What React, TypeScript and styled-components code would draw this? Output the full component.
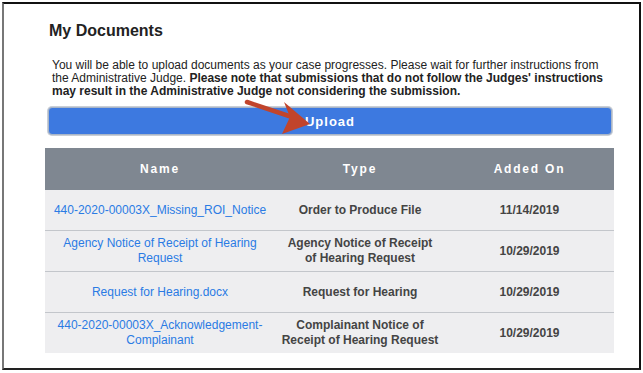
import React from 'react';
import styled, { createGlobalStyle } from 'styled-components';

const GlobalStyle = createGlobalStyle`
  body {
    margin: 0;
    background: #ffffff;
    font-family: "Liberation Sans", Arial, sans-serif;
  }
`

const Frame = styled.div`
  position: relative;
  box-sizing: border-box;
  margin: 2px 0 0 2px;
  width: 639px;
  height: 368px;
  border-top: 2px solid #111;
  border-right: 2px solid #111;
  border-bottom: 2px solid #222;
  border-left: 2px solid #777;
  padding: 0 24px 0 41px;
`

const Title = styled.h2`
  margin: 18px 0 0 4px;
  font-size: 16px;
  font-weight: bold;
  color: #222;
`

const Intro = styled.p`
  margin: 19px 0 0 7px;
  font-size: 12px;
  line-height: 13px;
  color: #222;
  width: 560px;

  strong {
    font-weight: bold;
  }
`

const UploadButton = styled.button`
  display: block;
  box-sizing: border-box;
  margin: 9px 0 0 3px;
  width: 564px;
  height: 28px;
  border: 1px solid #a9b6c8;
  border-radius: 4px;
  background: #3d79e0;
  color: #fff;
  font-family: "Liberation Sans", Arial, sans-serif;
  font-size: 13px;
  font-weight: bold;
  letter-spacing: 1px;
  box-shadow: 0 0 0 1px #c9ced6;
`

const Table = styled.table`
  margin-top: 13px;
  width: 569px;
  border-collapse: collapse;
  table-layout: fixed;
`

const HeadCell = styled.th<{ $w: number }>`
  width: ${p => p.$w}px;
  height: 42px;
  padding: 0;
  background: #7f8791;
  color: #fff;
  font-size: 12px;
  font-weight: bold;
  letter-spacing: 1.8px;
  text-align: center;
`

const Row = styled.tr`
  background: #eeeef0;
  border-top: 1px solid #c3c6cb;

  &:first-child {
    border-top: none;
  }
`

const Cell = styled.td<{ $bold?: boolean }>`
  height: 40px;
  padding: 0 6px;
  text-align: center;
  font-size: 12px;
  line-height: 15px;
  font-weight: ${p => (p.$bold ? 'bold' : 'normal')};
  color: #444;
`

const DocLink = styled.a`
  color: #2a7be4;
  text-decoration: none;
`

const Arrow = styled.svg`
  position: absolute;
  left: 240px;
  top: 93px;
`

const docs = [
  { name: '440-2020-00003X_Missing_ROI_Notice', type: 'Order to Produce File', date: '11/14/2019' },
  { name: 'Agency Notice of Receipt of Hearing Request', type: 'Agency Notice of Receipt of Hearing Request', date: '10/29/2019' },
  { name: 'Request for Hearing.docx', type: 'Request for Hearing', date: '10/29/2019' },
  { name: '440-2020-00003X_Acknowledgement-Complainant', type: 'Complainant Notice of Receipt of Hearing Request', date: '10/29/2019' },
]

const App = () => {
  return (
    <>
      <GlobalStyle />
      <Frame>
        <Title>My Documents</Title>
        <Intro>
          You will be able to upload documents as your case progresses. Please wait for further instructions from
          the Administrative Judge. <strong>Please note that submissions that do not follow the Judges' instructions
          may result in the Administrative Judge not considering the submission.</strong>
        </Intro>
        <UploadButton>Upload</UploadButton>
        <Table>
          <thead>
            <tr>
              <HeadCell $w={230}>Name</HeadCell>
              <HeadCell $w={170}>Type</HeadCell>
              <HeadCell $w={169}>Added On</HeadCell>
            </tr>
          </thead>
          <tbody>
            {docs.map(d => (
              <Row key={d.name}>
                <Cell><DocLink href="#">{d.name}</DocLink></Cell>
                <Cell $bold>{d.type}</Cell>
                <Cell $bold>{d.date}</Cell>
              </Row>
            ))}
          </tbody>
        </Table>
        <Arrow width="70" height="40" viewBox="0 0 70 40">
          <line x1="3" y1="5" x2="48" y2="20" stroke="#c1442c" strokeWidth="4.5" strokeLinecap="round" />
          <polygon points="66,27 38,37 46,20 40,5" fill="#c1442c" />
        </Arrow>
      </Frame>
    </>
  )
}

export default App;
